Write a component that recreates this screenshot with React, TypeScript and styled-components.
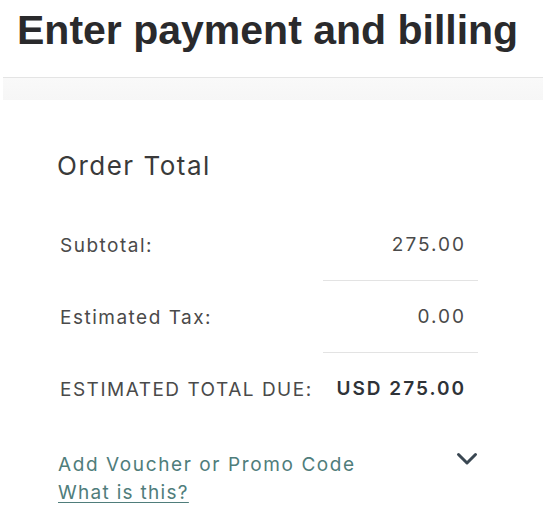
import React from "react";
import styled, { createGlobalStyle } from "styled-components";

const GlobalStyle = createGlobalStyle`
  html, body {
    margin: 0;
    padding: 0;
    background: #ffffff;
  }
  body {
    font-family: Inter, "Liberation Sans", Arial, sans-serif;
    -webkit-font-smoothing: antialiased;
  }
`;

const Page = styled.div`
  width: 554px;
  min-height: 527px;
  background: #ffffff;
`;

const Title = styled.h1`
  margin: 6px 0 23px 17px;
  font-family: "Liberation Sans", Arial, Helvetica, sans-serif;
  font-weight: 700;
  font-size: 41px;
  line-height: 48px;
  letter-spacing: 0;
  color: #2a2a2c;
`;

const Band = styled.div`
  margin: 0 11px 0 3px;
  height: 22px;
  border-top: 1px solid #e4e4e4;
  background: linear-gradient(#f9f9f9, #f6f6f6);
`;

const Summary = styled.section`
  width: 421px;
  margin: 50px 0 0 57px;
`;

const Heading = styled.h2`
  margin: 0 0 27px;
  font-weight: 400;
  font-size: 26px;
  line-height: 32px;
  letter-spacing: 1.5px;
  color: #3a3a3a;
`;

const Row = styled.div`
  display: grid;
  grid-template-columns: 1fr 155px;
  align-items: start;
  font-size: 19px;
  line-height: 24px;
  letter-spacing: 1.5px;
  color: #4a4a4a;
`;

const Label = styled.span`
  padding: 25px 0 0 3px;
`;

const Value = styled.span<{ $ruled?: boolean; $strong?: boolean }>`
  padding: 24px 12px 23px 0;
  text-align: right;
  border-bottom: 1px solid ${(p) => (p.$ruled ? "#e3e3e3" : "transparent")};
  font-weight: ${(p) => (p.$strong ? 600 : 400)};
  letter-spacing: 2px;
  color: ${(p) => (p.$strong ? "#2f3338" : "#4a4a4a")};
`;

const Promo = styled.div`
  margin-top: 26px;
  display: flex;
  justify-content: space-between;
  align-items: flex-start;
`;

const PromoText = styled.div`
  display: flex;
  flex-direction: column;
  padding-left: 1px;
  font-size: 19px;
  line-height: 28px;
  letter-spacing: 1.6px;
  color: #4f7d7b;
`;

const HelpLink = styled.a`
  color: #4f7d7b;
  letter-spacing: 1.3px;
  text-decoration: underline;
  text-underline-offset: 3px;
  text-decoration-thickness: 1px;
  align-self: flex-start;
  cursor: pointer;
`;

const Toggle = styled.button`
  border: 0;
  background: transparent;
  padding: 0;
  margin-top: 1px;
  width: 22px;
  height: 14px;
  display: flex;
  cursor: pointer;
`;

export default function App() {
  return (
    <>
      <GlobalStyle />
      <Page>
        <Title>Enter payment and billing</Title>
        <Band />
        <Summary>
          <Heading>Order Total</Heading>
          <Row>
            <Label>Subtotal:</Label>
            <Value $ruled>275.00</Value>
          </Row>
          <Row>
            <Label>Estimated Tax:</Label>
            <Value $ruled>0.00</Value>
          </Row>
          <Row>
            <Label>ESTIMATED TOTAL DUE:</Label>
            <Value $strong>USD 275.00</Value>
          </Row>
          <Promo>
            <PromoText>
              <span>Add Voucher or Promo Code</span>
              <HelpLink>What is this?</HelpLink>
            </PromoText>
            <Toggle aria-label="Expand">
              <svg width="22" height="14" viewBox="0 0 22 14">
                <path
                  d="M2.5 2.5 L11 11 L19.5 2.5"
                  fill="none"
                  stroke="#3a4752"
                  strokeWidth="3"
                  strokeLinecap="round"
                  strokeLinejoin="round"
                />
              </svg>
            </Toggle>
          </Promo>
        </Summary>
      </Page>
    </>
  );
}
